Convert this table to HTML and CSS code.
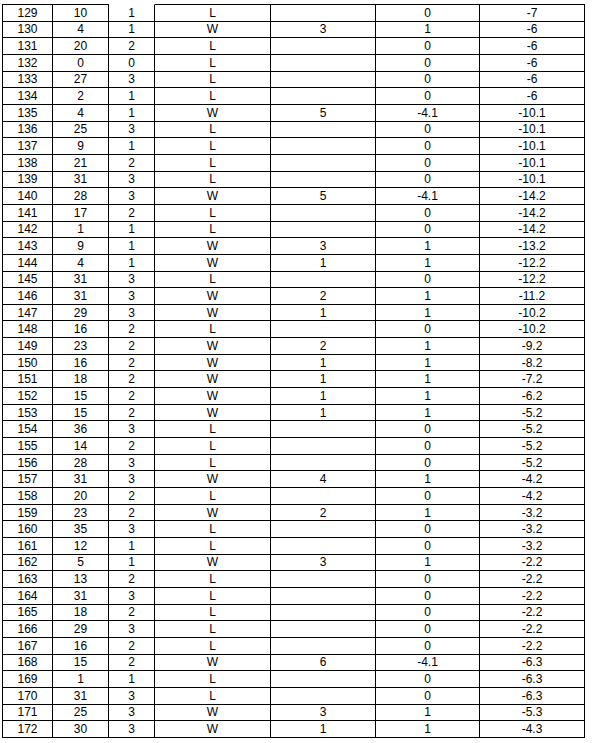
FILE: index.html
```html
<!DOCTYPE html>
<html lang="en">
<head>
<meta charset="utf-8">
<title>Table</title>
<link rel="stylesheet" href="styles.css">
</head>
<body>
<div class="sheet">
<div class="c top">129</div><div class="c top">10</div><div class="c top gap">1</div><div class="c top">L</div><div class="c top"></div><div class="c top">0</div><div class="c top">-7</div>
<div class="c">130</div><div class="c">4</div><div class="c">1</div><div class="c">W</div><div class="c">3</div><div class="c">1</div><div class="c">-6</div>
<div class="c">131</div><div class="c">20</div><div class="c">2</div><div class="c">L</div><div class="c"></div><div class="c">0</div><div class="c">-6</div>
<div class="c">132</div><div class="c">0</div><div class="c">0</div><div class="c">L</div><div class="c"></div><div class="c">0</div><div class="c">-6</div>
<div class="c">133</div><div class="c">27</div><div class="c">3</div><div class="c">L</div><div class="c"></div><div class="c">0</div><div class="c">-6</div>
<div class="c">134</div><div class="c">2</div><div class="c">1</div><div class="c">L</div><div class="c"></div><div class="c">0</div><div class="c">-6</div>
<div class="c">135</div><div class="c">4</div><div class="c">1</div><div class="c">W</div><div class="c">5</div><div class="c">-4.1</div><div class="c">-10.1</div>
<div class="c">136</div><div class="c">25</div><div class="c">3</div><div class="c">L</div><div class="c"></div><div class="c">0</div><div class="c">-10.1</div>
<div class="c">137</div><div class="c">9</div><div class="c">1</div><div class="c">L</div><div class="c"></div><div class="c">0</div><div class="c">-10.1</div>
<div class="c">138</div><div class="c">21</div><div class="c">2</div><div class="c">L</div><div class="c"></div><div class="c">0</div><div class="c">-10.1</div>
<div class="c">139</div><div class="c">31</div><div class="c">3</div><div class="c">L</div><div class="c"></div><div class="c">0</div><div class="c">-10.1</div>
<div class="c">140</div><div class="c">28</div><div class="c">3</div><div class="c">W</div><div class="c">5</div><div class="c">-4.1</div><div class="c">-14.2</div>
<div class="c">141</div><div class="c">17</div><div class="c">2</div><div class="c">L</div><div class="c"></div><div class="c">0</div><div class="c">-14.2</div>
<div class="c">142</div><div class="c">1</div><div class="c">1</div><div class="c">L</div><div class="c"></div><div class="c">0</div><div class="c">-14.2</div>
<div class="c">143</div><div class="c">9</div><div class="c">1</div><div class="c">W</div><div class="c">3</div><div class="c">1</div><div class="c">-13.2</div>
<div class="c">144</div><div class="c">4</div><div class="c">1</div><div class="c">W</div><div class="c">1</div><div class="c">1</div><div class="c">-12.2</div>
<div class="c">145</div><div class="c">31</div><div class="c">3</div><div class="c">L</div><div class="c"></div><div class="c">0</div><div class="c">-12.2</div>
<div class="c">146</div><div class="c">31</div><div class="c">3</div><div class="c">W</div><div class="c">2</div><div class="c">1</div><div class="c">-11.2</div>
<div class="c">147</div><div class="c">29</div><div class="c">3</div><div class="c">W</div><div class="c">1</div><div class="c">1</div><div class="c">-10.2</div>
<div class="c">148</div><div class="c">16</div><div class="c">2</div><div class="c">L</div><div class="c"></div><div class="c">0</div><div class="c">-10.2</div>
<div class="c">149</div><div class="c">23</div><div class="c">2</div><div class="c">W</div><div class="c">2</div><div class="c">1</div><div class="c">-9.2</div>
<div class="c">150</div><div class="c">16</div><div class="c">2</div><div class="c">W</div><div class="c">1</div><div class="c">1</div><div class="c">-8.2</div>
<div class="c">151</div><div class="c">18</div><div class="c">2</div><div class="c">W</div><div class="c">1</div><div class="c">1</div><div class="c">-7.2</div>
<div class="c">152</div><div class="c">15</div><div class="c">2</div><div class="c">W</div><div class="c">1</div><div class="c">1</div><div class="c">-6.2</div>
<div class="c">153</div><div class="c">15</div><div class="c">2</div><div class="c">W</div><div class="c">1</div><div class="c">1</div><div class="c">-5.2</div>
<div class="c">154</div><div class="c">36</div><div class="c">3</div><div class="c">L</div><div class="c"></div><div class="c">0</div><div class="c">-5.2</div>
<div class="c">155</div><div class="c">14</div><div class="c">2</div><div class="c">L</div><div class="c"></div><div class="c">0</div><div class="c">-5.2</div>
<div class="c">156</div><div class="c">28</div><div class="c">3</div><div class="c">L</div><div class="c"></div><div class="c">0</div><div class="c">-5.2</div>
<div class="c">157</div><div class="c">31</div><div class="c">3</div><div class="c">W</div><div class="c">4</div><div class="c">1</div><div class="c">-4.2</div>
<div class="c">158</div><div class="c">20</div><div class="c">2</div><div class="c">L</div><div class="c"></div><div class="c">0</div><div class="c">-4.2</div>
<div class="c">159</div><div class="c">23</div><div class="c">2</div><div class="c">W</div><div class="c">2</div><div class="c">1</div><div class="c">-3.2</div>
<div class="c">160</div><div class="c">35</div><div class="c">3</div><div class="c">L</div><div class="c"></div><div class="c">0</div><div class="c">-3.2</div>
<div class="c">161</div><div class="c">12</div><div class="c">1</div><div class="c">L</div><div class="c"></div><div class="c">0</div><div class="c">-3.2</div>
<div class="c">162</div><div class="c">5</div><div class="c">1</div><div class="c">W</div><div class="c">3</div><div class="c">1</div><div class="c">-2.2</div>
<div class="c">163</div><div class="c">13</div><div class="c">2</div><div class="c">L</div><div class="c"></div><div class="c">0</div><div class="c">-2.2</div>
<div class="c">164</div><div class="c">31</div><div class="c">3</div><div class="c">L</div><div class="c"></div><div class="c">0</div><div class="c">-2.2</div>
<div class="c">165</div><div class="c">18</div><div class="c">2</div><div class="c">L</div><div class="c"></div><div class="c">0</div><div class="c">-2.2</div>
<div class="c">166</div><div class="c">29</div><div class="c">3</div><div class="c">L</div><div class="c"></div><div class="c">0</div><div class="c">-2.2</div>
<div class="c">167</div><div class="c">16</div><div class="c">2</div><div class="c">L</div><div class="c"></div><div class="c">0</div><div class="c">-2.2</div>
<div class="c">168</div><div class="c">15</div><div class="c">2</div><div class="c">W</div><div class="c">6</div><div class="c">-4.1</div><div class="c">-6.3</div>
<div class="c">169</div><div class="c">1</div><div class="c">1</div><div class="c">L</div><div class="c"></div><div class="c">0</div><div class="c">-6.3</div>
<div class="c">170</div><div class="c">31</div><div class="c">3</div><div class="c">L</div><div class="c"></div><div class="c">0</div><div class="c">-6.3</div>
<div class="c">171</div><div class="c">25</div><div class="c">3</div><div class="c">W</div><div class="c">3</div><div class="c">1</div><div class="c">-5.3</div>
<div class="c">172</div><div class="c">30</div><div class="c">3</div><div class="c">W</div><div class="c">1</div><div class="c">1</div><div class="c">-4.3</div>
</div>
</body>
</html>
```

FILE: styles.css
```css
html, body {
  margin: 0;
  padding: 0;
  background: #ffffff;
}

body {
  font-family: "Liberation Sans", Arial, sans-serif;
  font-size: 12px;
  color: #000000;
}

.sheet {
  display: grid;
  grid-template-columns: 50px 56px 46px 116px 105px 104px 105px;
  grid-template-rows: 17.67px repeat(43, 16.67px);
  width: 582px;
  margin: 4px 0 0 2px;
  border-left: 1px solid #000000;
}

.c {
  box-sizing: border-box;
  display: flex;
  align-items: center;
  justify-content: center;
  border-right: 1px solid #000000;
  border-bottom: 1px solid #000000;
  white-space: nowrap;
  overflow: hidden;
}

.top {
  border-top: 1px solid #000000;
}

.top.gap {
  border-top-color: #ffffff;
}
```
